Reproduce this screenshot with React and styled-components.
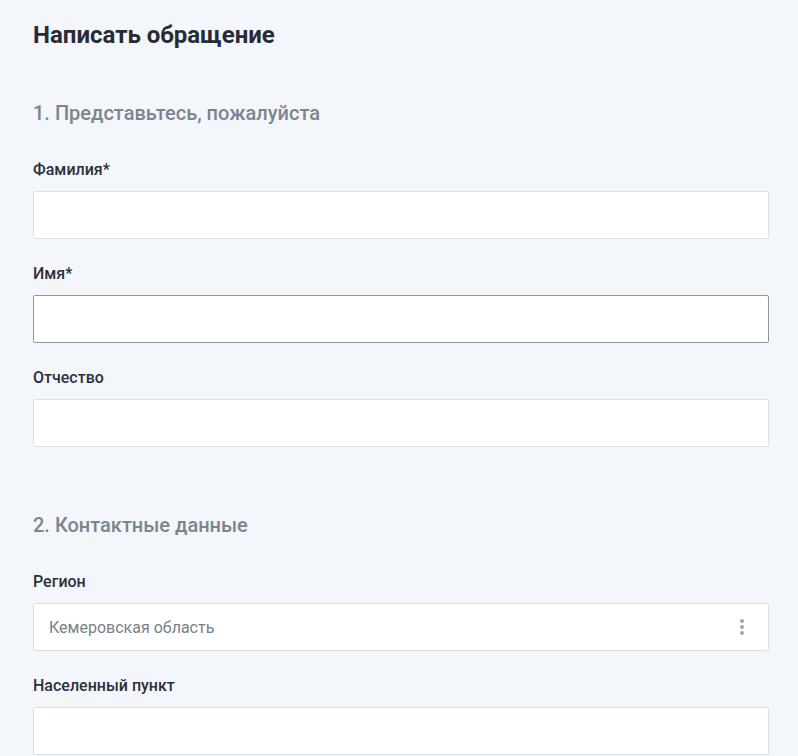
import React from "react";
import styled, { createGlobalStyle } from "styled-components";

const Global = createGlobalStyle`
  html, body { margin: 0; padding: 0; background: #f3f6fb; }
  body { font-family: Roboto, "Noto Sans", Arial, sans-serif; }
  * { box-sizing: border-box; }
`;

const Page = styled.div`
  width: 798px;
  min-height: 756px;
  background: #f3f6fb;
  padding: 20px 29px 0 33px;
  display: flex;
  flex-direction: column;
`;

const Title = styled.h1`
  margin: 0;
  font-size: 24px;
  line-height: 30px;
  font-weight: 700;
  color: #272b35;
`;

const SectionTitle = styled.h2`
  margin: ${(p) => (p.$first ? "51px" : "41px")} 0 35px;
  font-size: 20px;
  line-height: 24px;
  font-weight: 500;
  color: #7b858f;
`;

const Field = styled.div`
  display: flex;
  flex-direction: column;
  gap: 11px;
  margin-bottom: 25px;
  &:last-child { margin-bottom: 0; }
`;

const Label = styled.label`
  font-size: 16px;
  line-height: 20px;
  font-weight: 500;
  color: #2c3039;
`;

const Input = styled.div`
  height: 48px;
  background: #fff;
  border: 1px solid ${(p) => (p.$focused ? "#8d98a5" : "#dde1e7")};
  border-radius: 2px;
  display: flex;
  align-items: center;
  padding: 0 15px;
  font-size: 16px;
  color: #7a8088;
`;

const SelectText = styled.span`
  flex: 1;
`;

const Dots = styled.span`
  display: flex;
  flex-direction: column;
  gap: 2px;
  margin-right: 9px;
  & > i {
    width: 4px;
    height: 4px;
    border-radius: 50%;
    background: #9ca6b2;
  }
`;

export default function App() {
  return (
    <>
      <Global />
      <Page>
        <Title>Написать обращение</Title>
        <SectionTitle $first>1. Представьтесь, пожалуйста</SectionTitle>
        <Field>
          <Label>Фамилия*</Label>
          <Input />
        </Field>
        <Field>
          <Label>Имя*</Label>
          <Input $focused />
        </Field>
        <Field>
          <Label>Отчество</Label>
          <Input />
        </Field>
        <SectionTitle>2. Контактные данные</SectionTitle>
        <Field>
          <Label>Регион</Label>
          <Input>
            <SelectText>Кемеровская область</SelectText>
            <Dots><i /><i /><i /></Dots>
          </Input>
        </Field>
        <Field>
          <Label>Населенный пункт</Label>
          <Input />
        </Field>
      </Page>
    </>
  );
}
